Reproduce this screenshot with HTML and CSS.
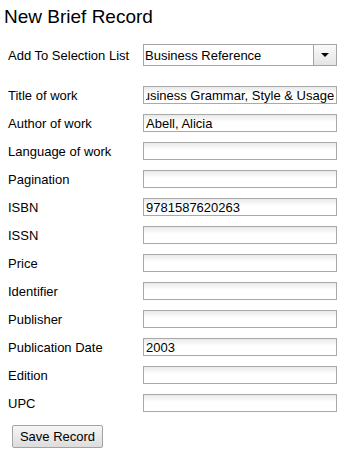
FILE: index.html
```html
<!DOCTYPE html>
<html lang="en">
<head>
    <meta charset="UTF-8">
    <meta name="viewport" content="width=device-width, initial-scale=1.0">
    <title>New Brief Record</title>
    <link rel="stylesheet" href="styles.css">
</head>
<body>
    <div class="page">
        <h1>New Brief Record</h1>
        <form class="record-form" onsubmit="return false">
            <div class="list-row">
                <label for="list">Add To Selection List</label>
                <div class="select-box">
                    <select id="list">
                        <option>Business Reference</option>
                    </select>
                    <span class="select-arrow"></span>
                </div>
            </div>
            <div class="fields">
                <label for="title">Title of work</label>
                <input type="text" id="title" value="Business Grammar, Style &amp; Usage">
                <label for="author">Author of work</label>
                <input type="text" id="author" value="Abell, Alicia">
                <label for="language">Language of work</label>
                <input type="text" id="language">
                <label for="pagination">Pagination</label>
                <input type="text" id="pagination">
                <label for="isbn">ISBN</label>
                <input type="text" id="isbn" value="9781587620263">
                <label for="issn">ISSN</label>
                <input type="text" id="issn">
                <label for="price">Price</label>
                <input type="text" id="price">
                <label for="identifier">Identifier</label>
                <input type="text" id="identifier">
                <label for="publisher">Publisher</label>
                <input type="text" id="publisher">
                <label for="pubdate">Publication Date</label>
                <input type="text" id="pubdate" value="2003">
                <label for="edition">Edition</label>
                <input type="text" id="edition">
                <label for="upc">UPC</label>
                <input type="text" id="upc">
            </div>
            <button class="save-button" type="submit">Save Record</button>
        </form>
    </div>

    <script>
        // long titles show their end, as after typing
        const title = document.getElementById('title');
        title.scrollLeft = title.scrollWidth;
    </script>
</body>
</html>
```

FILE: styles.css
```css
body {
    font-family: "Liberation Sans", Arial, sans-serif;
    font-size: 13px;
    color: #000;
    background-color: #fff;
    margin: 0;
}
.page {
    padding: 6px 0 0 4px;
}
.page h1 {
    font-size: 19px;
    font-weight: normal;
    line-height: 21px;
    margin: 0 0 17px 0;
}
.record-form {
    padding-left: 4px;
}
.list-row,
.fields {
    display: grid;
    grid-template-columns: 135px 194px;
    align-items: baseline;
}
.list-row {
    margin-bottom: 20px;
}
.fields {
    row-gap: 10px;
}
.select-box {
    display: flex;
    height: 22px;
    box-sizing: border-box;
    border: 1px solid #a5a5a5;
    background-color: #fff;
}
.select-box select {
    flex: 1;
    appearance: none;
    -webkit-appearance: none;
    border: none;
    background: transparent;
    font-family: inherit;
    font-size: 13px;
    color: #000;
    padding: 0 1px;
    margin: 0;
    outline: none;
}
.select-arrow {
    width: 22px;
    border-left: 1px solid #a5a5a5;
    background: linear-gradient(#fafafa, #e4e4e4);
    display: flex;
    align-items: center;
    justify-content: center;
}
.select-arrow::after {
    content: "";
    border-left: 4px solid transparent;
    border-right: 4px solid transparent;
    border-top: 4px solid #000;
}
.fields input {
    height: 18px;
    box-sizing: border-box;
    border: 1px solid #a9a9a9;
    padding: 0 2px;
    margin: 0;
    font-family: inherit;
    font-size: 13px;
    color: #000;
    background: linear-gradient(#e9e9e9, #fff 7px);
    outline: none;
}
.save-button {
    margin: 13px 0 0 4px;
    width: 91px;
    height: 23px;
    font-family: inherit;
    font-size: 13px;
    color: #000;
    border: 1px solid #a3a3a3;
    border-radius: 2px;
    background: linear-gradient(#f6f6f6, #dcdcdc);
    padding: 0;
    cursor: pointer;
}
```
